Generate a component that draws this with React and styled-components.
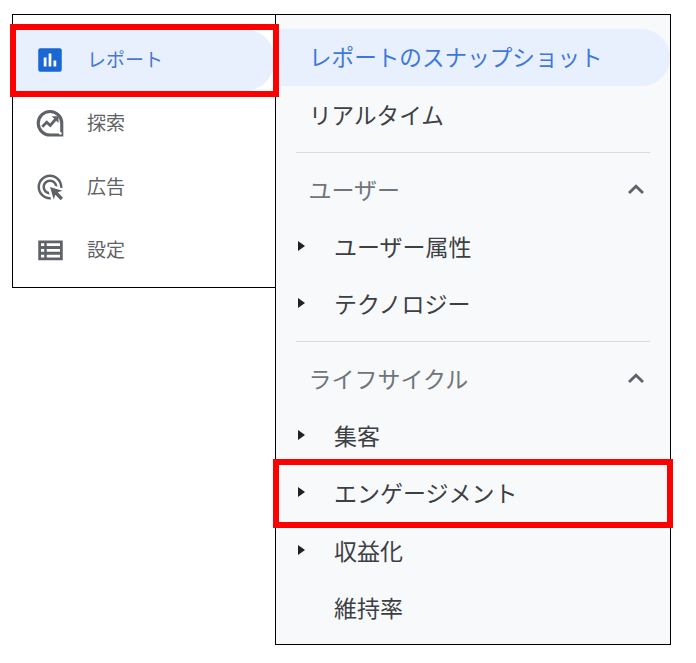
import React from 'react';
import styled, { createGlobalStyle } from 'styled-components';

const GlobalStyle = createGlobalStyle`
  body {
    margin: 0;
    background: #fff;
    font-family: "Noto Sans CJK JP", "Noto Sans", sans-serif;
  }
`
const Page = styled.div`
  position: relative;
  width: 696px;
  height: 663px;
  padding: 14px 0 0 12px;
  box-sizing: border-box;
  display: flex;
  align-items: flex-start;
  overflow: hidden;
`
const SideNav = styled.nav`
  width: 263px;
  height: 274px;
  box-sizing: border-box;
  padding-top: 14px;
  background: #fff;
  border: 1px solid #000;
  border-right: none;
  display: flex;
  flex-direction: column;
  gap: 1.67px;
`
const SideItem = styled.div`
  height: 62px;
  box-sizing: border-box;
  padding: 0 0 1px 22px;
  display: flex;
  align-items: center;
  gap: 22px;
  font-size: 19px;
  line-height: 1;
  color: ${(props) => (props.active ? '#4a76d4' : '#5f6368')};
  background: ${(props) => (props.active ? '#e8f0fe' : 'transparent')};
  border-radius: 0 31px 31px 0;
`
const SideLabel = styled.span`
  margin-bottom: 3px;
`
const Icon = styled.svg`
  width: 30px;
  height: 30px;
  flex-shrink: 0;
  display: block;
`
const SubNav = styled.nav`
  width: 396px;
  height: 631px;
  box-sizing: border-box;
  padding-top: 14px;
  background: #f8f9fb;
  border: 1px solid #000;
`
const SubItem = styled.div`
  height: 57.33px;
  display: flex;
  align-items: center;
  line-height: 1;
  font-size: ${(props) => (props.nested ? '23px' : '22.6px')};
  color: ${(props) => (props.active ? '#3f78dc' : '#3c4043')};
  background: ${(props) => (props.active ? '#e8f0fe' : 'transparent')};
  border-radius: 0 29px 29px 0;
  padding-left: ${(props) => (props.nested ? '22px' : '33px')};
`
const Caret = styled.span`
  width: 0;
  height: 0;
  margin: 0 29px 1px 0;
  border-style: solid;
  border-width: 5.5px 0 5.5px 7px;
  border-color: transparent transparent transparent #202124;
`
const CaretSpace = styled.span`
  width: 36px;
`
const Divider = styled.div`
  height: 1px;
  margin: 8.7px 20px 7.3px;
  background: #dadce0;
`
const GroupHeader = styled.div`
  height: 57.33px;
  padding: 0 25px 0 32.5px;
  display: flex;
  align-items: center;
  justify-content: space-between;
  line-height: 1;
  font-size: 23px;
  color: #70757a;
`
const Chevron = styled.svg`
  width: 18px;
  height: 12px;
  display: block;
`
const Highlight = styled.div`
  position: absolute;
  left: ${(props) => props.x}px;
  top: ${(props) => props.y}px;
  width: ${(props) => props.w}px;
  height: ${(props) => props.h}px;
  box-sizing: border-box;
  border: 6px solid #ff0000;
`

const ReportIcon = () => (
  <Icon viewBox="0 0 24 24">
    <rect x="2.6" y="2.6" width="18.8" height="18.8" rx="1.6" fill="#1967d2" />
    <path d="M7 10h2.2v7.2H7zM10.9 6.8h2.2v10.4h-2.2zM14.8 12.4H17v4.8h-2.2z" fill="#fff" />
  </Icon>
)
const ExploreIcon = () => (
  <Icon viewBox="0 0 24 24">
    <path d="M12 2.8a9.4 9.4 0 1 0 0 18.8h9.4v-9.4A9.4 9.4 0 0 0 12 2.8z" fill="none" stroke="#5f6368" strokeWidth="2.5" />
    <path d="M5.8 15l3.6-3.6 2.8 2.6 4.6-5.4" fill="none" stroke="#5f6368" strokeWidth="2.2" />
    <path d="M13.4 6.6h5.4V12z" fill="#5f6368" />
    <circle cx="20.2" cy="20.2" r="1.1" fill="#fff" />
  </Icon>
)
const AdsIcon = () => (
  <Icon viewBox="0 0 24 24">
    <path
      fill="#5f6368"
      d="M11.71 17.99C8.53 17.84 6 15.22 6 12c0-3.31 2.69-6 6-6 3.22 0 5.84 2.53 5.99 5.71l-2.1-.63C15.48 9.31 13.89 8 12 8c-2.21 0-4 1.79-4 4 0 1.89 1.31 3.48 3.08 3.89l.63 2.1zM22 12c0 .3-.01.6-.04.9l-1.97-.59C20 12.21 20 12.1 20 12c0-4.42-3.58-8-8-8s-8 3.58-8 8 3.58 8 8 8c.1 0 .21 0 .31-.01l.59 1.97c-.3.03-.6.04-.9.04-5.52 0-10-4.48-10-10S6.48 2 12 2s10 4.48 10 10zm-3.77 4.26L22 15l-10-3 3 10 1.26-3.77 4.27 4.27 1.91-1.91-4.21-4.33z"
    />
  </Icon>
)
const TableIcon = () => (
  <Icon viewBox="0 0 24 24">
    <path
      fill="#5f6368"
      fillRule="evenodd"
      d="M2.6 4.4h19.6v15.8H2.6zM4.8 6.6v2.2h2.6V6.6zM9.4 6.6v2.2H20V6.6zM4.8 11.2v2.2h2.6v-2.2zM9.4 11.2v2.2H20v-2.2zM4.8 15.8V18h2.6v-2.2zM9.4 15.8V18H20v-2.2z"
    />
  </Icon>
)
const ChevronUp = () => (
  <Chevron viewBox="0 0 18 12">
    <path d="M2 10L9 3.2 16 10" fill="none" stroke="#5f6368" strokeWidth="2.8" />
  </Chevron>
)

const Group = ({ title, items }) => (
  <>
    <Divider />
    <GroupHeader>
      <span>{title}</span>
      <ChevronUp />
    </GroupHeader>
    {items.map((item) => (
      <SubItem nested key={item.label}>
        {item.leaf ? <CaretSpace /> : <Caret />}
        <span>{item.label}</span>
      </SubItem>
    ))}
  </>
)

export default function App() {
  return (
    <Page>
      <GlobalStyle />
      <SideNav>
        <SideItem active><ReportIcon /><SideLabel>レポート</SideLabel></SideItem>
        <SideItem><ExploreIcon /><SideLabel>探索</SideLabel></SideItem>
        <SideItem><AdsIcon /><SideLabel>広告</SideLabel></SideItem>
        <SideItem><TableIcon /><SideLabel>設定</SideLabel></SideItem>
      </SideNav>
      <SubNav>
        <SubItem active><span>レポートのスナップショット</span></SubItem>
        <SubItem><span>リアルタイム</span></SubItem>
        <Group title="ユーザー" items={[{ label: 'ユーザー属性' }, { label: 'テクノロジー' }]} />
        <Group
          title="ライフサイクル"
          items={[
            { label: '集客' },
            { label: 'エンゲージメント' },
            { label: '収益化' },
            { label: '維持率', leaf: true },
          ]}
        />
      </SubNav>
      <Highlight x={10} y={24} w={269} h={73} />
      <Highlight x={273} y={459} w={400} h={69} />
    </Page>
  );
}
